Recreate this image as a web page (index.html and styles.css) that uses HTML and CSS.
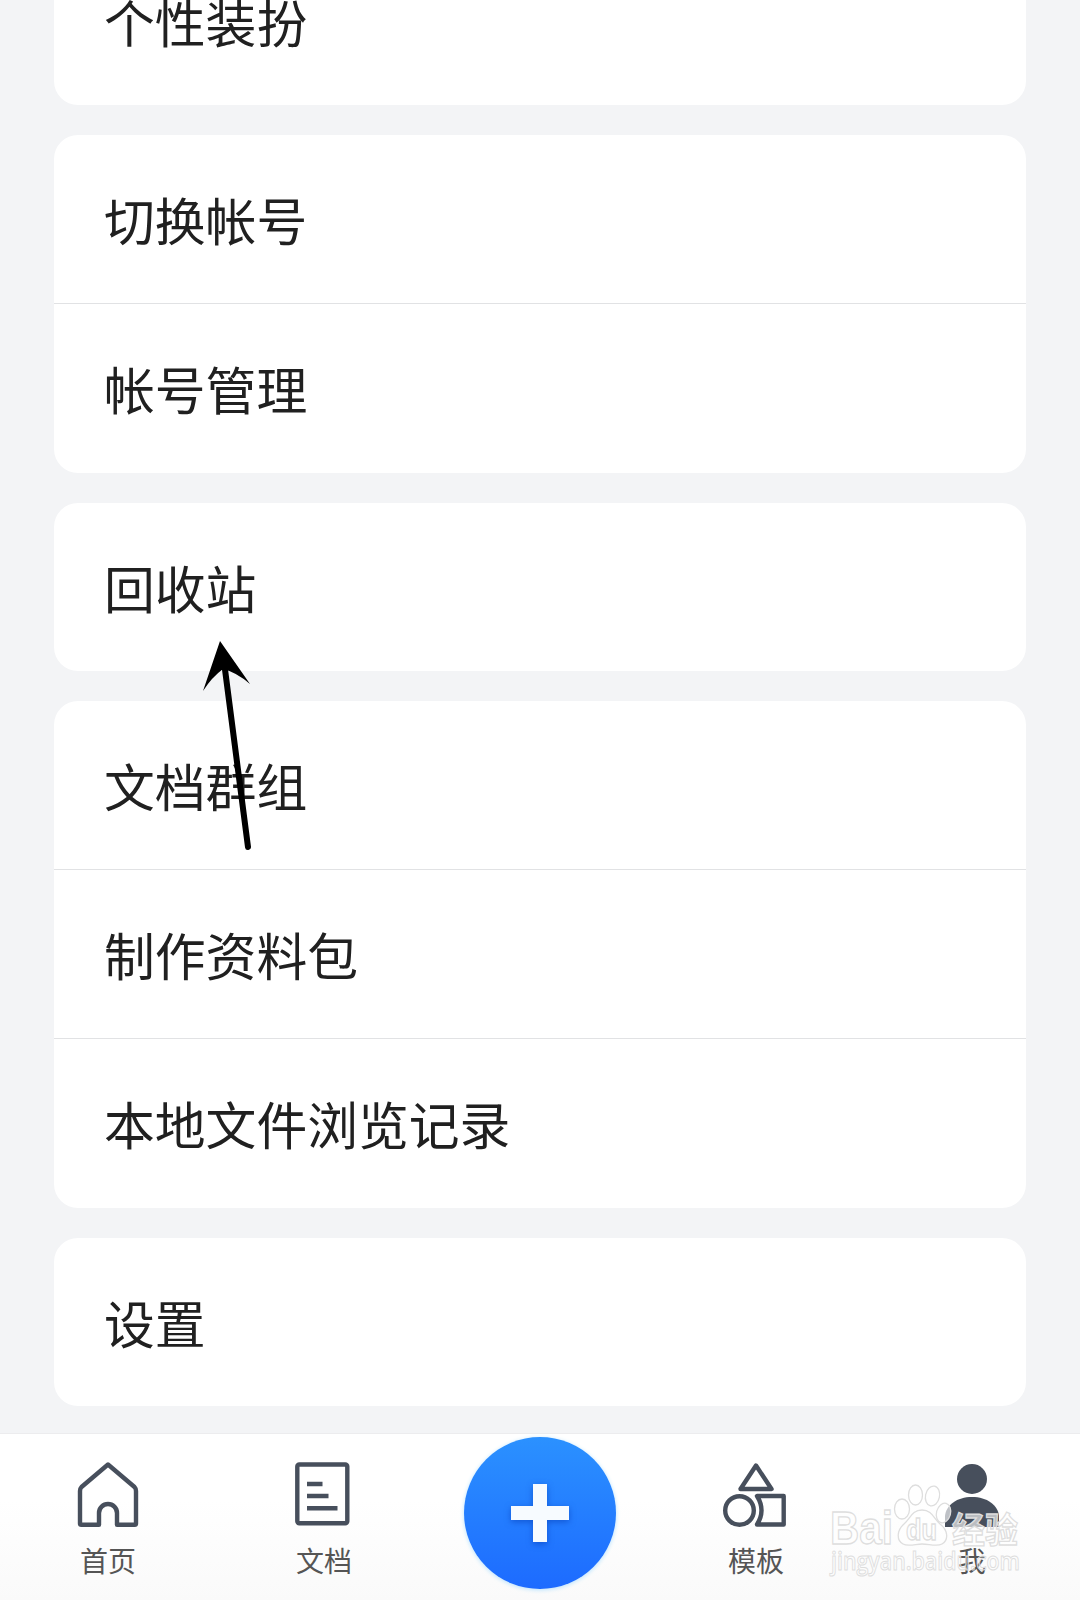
FILE: index.html
```html
<!DOCTYPE html>
<html lang="zh-CN">
<head>
    <meta charset="UTF-8">
    <meta name="viewport" content="width=device-width, initial-scale=1.0">
    <title>我</title>
    <link rel="stylesheet" href="styles.css">
</head>

<body>
    <main class="page">
        <div class="card">
            <div class="row">个性装扮</div>
        </div>

        <div class="card">
            <div class="row">切换帐号</div>
            <div class="row">帐号管理</div>
        </div>

        <div class="card">
            <div class="row">回收站</div>
        </div>

        <div class="card">
            <div class="row">文档群组</div>
            <div class="row">制作资料包</div>
            <div class="row">本地文件浏览记录</div>
        </div>

        <div class="card">
            <div class="row">设置</div>
        </div>
    </main>

    <nav class="tabbar">
        <a class="tab">
            <svg class="icon" width="70" height="70" viewBox="0 0 70 70">
                <path d="M35 3.500 L61.500 26 Q63 27.500 63 30 V62.500 Q63 63.700 61.800 63.700 H44 V52 A9 9 0 0 0 26 52 V63.700 H8.200 Q7 63.700 7 62.500 V30 Q7 27.500 8.500 26 Z"/>
            </svg>
            <span>首页</span>
        </a>
        <a class="tab">
            <svg class="icon" width="70" height="70" viewBox="0 0 70 70">
                <rect x="8.300" y="3.500" width="50" height="58.800" rx="2"/>
                <path d="M18 23 H33.500 M18 35 H39.500 M18 47.300 H48.500"/>
            </svg>
            <span>文档</span>
        </a>
        <a class="tab">
            <div class="add">
                <svg width="60" height="60" viewBox="0 0 60 60">
                    <path d="M23 1 H37 V23 H59 V37 H37 V59 H23 V37 H1 V23 H23 Z"/>
                </svg>
            </div>
        </a>
        <a class="tab">
            <svg class="icon" width="70" height="70" viewBox="0 0 70 70">
                <path d="M35 4.500 L50.500 28 H19.500 Z"/>
                <circle cx="18.500" cy="49.500" r="14.300"/>
                <path d="M36 35 H62.700 V63.500 H36 Q45 49.500 36 35 Z"/>
            </svg>
            <span>模板</span>
        </a>
        <a class="tab">
            <svg class="icon solid" width="70" height="70" viewBox="0 0 70 70">
                <circle cx="35" cy="18" r="15"/>
                <path d="M8 66 V55 C9 44 20 36 35 36 C50 36 61 44 62 55 V66 Z"/>
            </svg>
            <span>我</span>
        </a>
    </nav>

    <!-- arrow pointing to 回收站 -->
    <svg class="arrow" width="60" height="220" viewBox="0 0 60 220">
        <path class="line" d="M23 24 L48 217"/>
        <path d="M20 11 L50 54 Q36 42 23 39 Q12 47 3 61 Z"/>
    </svg>

    <svg class="watermark" width="210" height="110" viewBox="0 0 210 110">
        <text class="logo" x="10" y="64" textLength="63" lengthAdjust="spacingAndGlyphs">Bai</text>
        <ellipse cx="82" cy="29" rx="7.500" ry="10"/>
        <ellipse cx="95.500" cy="15" rx="7" ry="10"/>
        <ellipse cx="112.500" cy="16" rx="7" ry="10" transform="rotate(12 112.500 16)"/>
        <ellipse cx="123.500" cy="33" rx="7" ry="10" transform="rotate(15 123.500 33)"/>
        <path d="M102 30 C92 30 90 39 84 44 C77 50 76 60 83 64 C88 67 96 64 102 64 C109 64 117 67 122 64 C129 60 128 50 120 44 C114 39 112 30 102 30 Z"/>
        <text class="du" x="86" y="60" textLength="31" lengthAdjust="spacingAndGlyphs">du</text>
        <text class="cn" x="132" y="63" textLength="66" lengthAdjust="spacingAndGlyphs">经验</text>
        <text class="url" x="11" y="90" textLength="189" lengthAdjust="spacingAndGlyphs">jingyan.baidu.com</text>
    </svg>
</body>
</html>
```

FILE: styles.css
```css
* {
    box-sizing: border-box;
}

body {
    position: relative;
    margin: 0;
    width: 1080px;
    height: 1600px;
    overflow: hidden;
    background: #f3f4f6;
    font-family: "Noto Sans CJK SC", sans-serif;
}

.page {
    display: flex;
    flex-direction: column;
    gap: 30px;
    height: 1433px;
    padding: 0 54px;
    margin-top: -63.3px;
}

.card {
    background: #fff;
    border-radius: 24px;
}

.row {
    height: 168.3px;
    padding: 3px 50px 0;
    font-size: 50.8px;
    line-height: 162px;
    color: #202020;
}

.row + .row {
    height: 169.3px;
    border-top: 1px solid #e1e2e4;
}

/* bottom navigation */
.tabbar {
    display: flex;
    height: 167px;
    margin-top: 63.3px;
    border-top: 1px solid #ececee;
    background: linear-gradient(#fff 40%, #fafafa);
}

.tab {
    display: flex;
    flex-direction: column;
    align-items: center;
    width: 216px;
    padding-top: 27px;
    font-size: 28px;
    line-height: 40px;
    color: #555;
}

.tab span {
    margin-top: 9px;
}

.icon {
    flex: none;
    fill: none;
    stroke: #474f5c;
    stroke-width: 4.4;
    stroke-linejoin: round;
}

.solid {
    fill: #474f5c;
    stroke: none;
}

.add {
    display: flex;
    align-items: center;
    justify-content: center;
    flex: none;
    width: 152px;
    height: 152px;
    margin-top: -24px;
    border-radius: 50%;
    background: linear-gradient(#2b91ff, #1d6bff);
    box-shadow: 0 1px 4px #b5e2ff;
}

.add svg {
    fill: #f7fbff;
    filter: drop-shadow(0 2px 3px rgba(0, 50, 170, .5));
}

.arrow {
    position: absolute;
    left: 200px;
    top: 630px;
    overflow: visible;
}

.arrow .line {
    stroke: #000;
    stroke-width: 6;
    stroke-linecap: round;
}

.watermark {
    position: absolute;
    left: 820px;
    top: 1480px;
    fill: rgba(255, 255, 255, .65);
    stroke: #dedede;
    stroke-width: 1.3;
    font-family: "Liberation Sans", sans-serif;
}

.logo {
    font-size: 46px;
    font-weight: bold;
}

.du {
    font-size: 29px;
    font-weight: bold;
}

.cn {
    font-family: "Noto Sans CJK SC", sans-serif;
    font-size: 35px;
    font-weight: bold;
}

.url {
    font-family: "Open Sans", sans-serif;
    font-size: 25px;
    font-weight: 600;
    fill: rgba(255, 255, 255, .25);
    stroke-width: 1;
}
```
